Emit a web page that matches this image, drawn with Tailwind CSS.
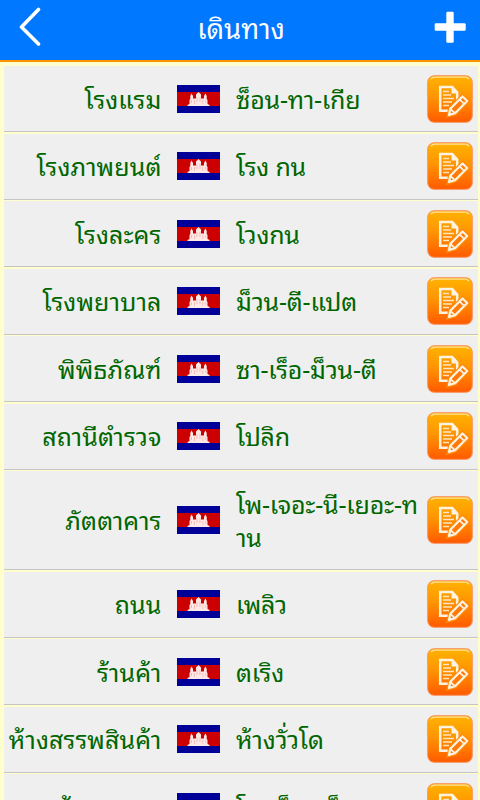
<!DOCTYPE html>
<html lang="th">
<head>
  <meta charset="UTF-8" />
  <meta name="viewport" content="width=device-width, initial-scale=1.0" />
  <title>เดินทาง</title>
  <script src="https://cdn.jsdelivr.net/npm/@tailwindcss/browser@4"></script>
</head>
<body class="h-[800px] overflow-hidden bg-[#ffffcc] font-['Noto_Sans_Thai_Looped','Noto_Sans',sans-serif]">
  <!-- Shared drawings -->
  <svg class="absolute h-0 w-0">
    <defs>
      <linearGradient id="orange" x1="0" y1="0" x2="0" y2="1">
        <stop offset="0" stop-color="#ffb300" />
        <stop offset="0.45" stop-color="#ff9500" />
        <stop offset="1" stop-color="#ff5a00" />
      </linearGradient>
    </defs>
    <symbol id="flag" viewBox="0 0 43 28">
      <rect width="43" height="28" fill="#000099" />
      <rect y="7" width="43" height="14" fill="#cc0000" />
      <path d="M10.500 21v-1l2-1v-4l.8-1v-3l1.200-2.500 1.500 2.500v2.500h3v-4l2.500-2.500 2.500 2.500v4h3v-2.500l1.500-2.500 1.200 2.500v3l.8 1v4l2 1v1z" fill="#ffe9e6" />
      <path d="M14.500 15v3M17.500 15v4M20 12v5M23 12v5M25.800 15v4M28.800 15v3" stroke="#eda0a0" stroke-width=".6" />
    </symbol>
    <symbol id="edit" viewBox="0 0 46 48">
      <rect x=".7" y=".7" width="44.600" height="46.600" rx="6.500" fill="url(#orange)" stroke="#f9925a" stroke-width="1" />
      <path d="M4 4.200Q5.500 2.200 8 2.200h30q2.500 0 4 2" fill="none" stroke="#ffe09a" stroke-width="1.300" />
      <path d="M13.200 12h12l5 5.500v15l-5 3.300h-12z" fill="none" stroke="#fff3e0" stroke-width="2.500" />
      <path d="M24.500 11.500v7h6.500z" fill="#fff3e0" />
      <path d="M16 16.500h6M16 20h8M16 23.500h11M16 27h9M16 30.500h6" fill="none" stroke="#ffe6c4" stroke-width="1.600" />
      <path d="M35.500 21.500l4.700 4.500-12.200 12.200-6 1.800 1.300-6.200z" fill="#ff7a08" stroke="#ff8a0a" stroke-width="4.500" />
      <path d="M35.500 21.500l4.700 4.500-12.200 12.200-6 1.800 1.300-6.200z" fill="#ff7a08" stroke="#fff3e0" stroke-width="2.200" stroke-linejoin="round" />
      <path d="M32.500 24.300l4.700 4.500M23.300 34l4.700 4.200" stroke="#fff3e0" stroke-width="1.700" />
      <path d="M22 40l.7-3 2.300 2.200z" fill="#fff3e0" />
    </symbol>
  </svg>

  <!-- Header -->
  <header class="flex h-[62px] items-center justify-between border-b-[2.5px] border-[#ff9200] bg-[#0078ff] pl-[18px] pr-3.5 text-white">
    <svg class="h-10 w-8 -mt-1.5" viewBox="0 0 32 40" fill="none" stroke="currentColor" stroke-width="3.600" stroke-linecap="round" stroke-linejoin="round">
      <path d="M20.500 2.500L3.500 20l17 17" />
    </svg>
    <h1 class="-mt-1.5 -ml-0.5 text-[27.500px] leading-[36px]">เดินทาง</h1>
    <svg class="h-8 w-8 -mt-1.5" viewBox="0 0 32 32" fill="currentColor">
      <rect x="12.300" y=".7" width="7.400" height="31" rx="1.200" />
      <rect x=".7" y="12.300" width="31" height="7.400" rx="1.200" />
    </svg>
  </header>

  <!-- Word list -->
  <ul id="wordList" class="mt-1 ml-1 mr-0.5 flex flex-col gap-[1.5px]"></ul>

  <script>
    const words = [
      ["โรงแรม", "ซ็อน-ทา-เกีย"],
      ["โรงภาพยนต์", "โรง กน"],
      ["โรงละคร", "โวงกน"],
      ["โรงพยาบาล", "ม็วน-ตี-แปต"],
      ["พิพิธภัณฑ์", "ซา-เร็อ-ม็วน-ตี"],
      ["สถานีตำรวจ", "โปลิก"],
      ["ภัตตาคาร", "โพ-เจอะ-นี-เยอะ-ท<br>าน"],
      ["ถนน", "เพลิว"],
      ["ร้านค้า", "ตเริง"],
      ["ห้างสรรพสินค้า", "ห้างวั่วโด"],
      ["ร้านอาหาร", "โพ-เร็ว-แม็น"],
    ];

    const wordList = document.getElementById("wordList");

    words.forEach(([thai, khmer]) => {
      const li = document.createElement("li");
      li.className = "flex shrink-0 items-center border-b border-[#c4c4c4] bg-[#efefef] text-[25px] leading-[33px] text-[#006600] whitespace-nowrap " + (khmer.includes("<br>") ? "h-[99px]" : "h-[66px]");
      li.innerHTML = `
        <span class="flex w-[157.500px] shrink-0 justify-end pb-px tracking-[0.1px]">${thai}</span>
        <svg class="ml-[15.500px] h-7 w-[43px] shrink-0"><use href="#flag" /></svg>
        <span class="ml-4 flex-1 pb-px tracking-[-0.2px]">${khmer}</span>
        <svg class="mr-[5px] h-12 w-[46px] shrink-0"><use href="#edit" /></svg>
      `;
      wordList.appendChild(li);
    });
  </script>
</body>
</html>
